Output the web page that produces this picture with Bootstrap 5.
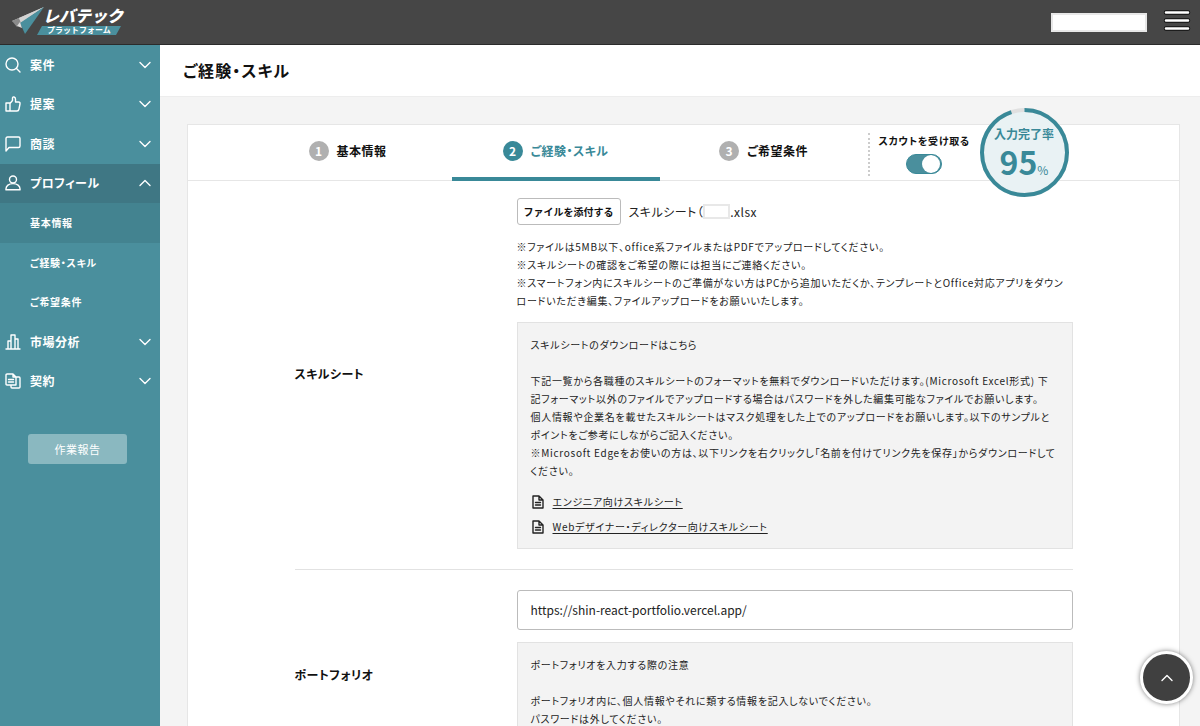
<!DOCTYPE html>
<html lang="ja">
<head>
<meta charset="utf-8">
<meta name="viewport" content="width=device-width, initial-scale=1">
<title>ご経験・スキル</title>
<link href="https://cdn.jsdelivr.net/npm/bootstrap@5.3.0/dist/css/bootstrap.min.css" rel="stylesheet">
<style>
:root { --teal: #4a8f9d; --teal-strong: #398998; --line: #e6e6e6; }
body { font-family: "Noto Sans CJK JP", sans-serif; font-feature-settings: "palt"; color: #222; background: #f4f4f4; font-size: 10px; line-height: 18px; letter-spacing: .07em; }
.topbar { background: #464646; height: 45px; border-bottom: 1px solid #2b2b2b; }
.user-box { width: 96px; height: 19px; border: 2px solid #e8e8e8; background: #fff; }
.side { width: 160px; background: var(--teal); }
.side-list { height: 356px; }
.side-list a { flex: 1; color: #fff; text-decoration: none; font-weight: 700; }
.side-main { gap: 9px; padding: 0 9px 0 5px; font-size: 12px; letter-spacing: .04em; }
.side-sub { padding-left: 30px; }
.side-open { background: #3f7784; }
.side-current { background: #438390; }
.side svg, .doc-link svg, .to-top svg { fill: none; stroke: currentColor; stroke-width: 1.4; stroke-linecap: round; stroke-linejoin: round; flex: none; }
.report { width: 99px; height: 30px; margin: 33px 0 0 28px; border-radius: 3px; background: #8ab8c0; color: #fff; font-size: 11px; letter-spacing: .04em; }
.screen { min-height: 100vh; }
.shell { height: calc(100vh - 45px); }
.shell main { overflow-y: auto; scrollbar-width: none; }
.shell main::-webkit-scrollbar { display: none; }
.page-head { height: 52px; border-bottom: 1px solid #ededed; padding-left: 23px; }
.page-head h1 { font-size: 16px; color: #111; letter-spacing: .07em; }
.panel { margin: 27px 20px 0 27px; border: 1px solid var(--line); background: #fff; }
.steps { height: 56px; border-bottom: 1px solid var(--line); }
.steps-inner { width: 880px; max-width: 100%; height: 55px; }
.step { width: 208px; color: #111; font-size: 12px; font-weight: 700; letter-spacing: .04em; text-decoration: none; border-bottom: 4px solid transparent; margin-bottom: -1px; }
.step-num { width: 20px; height: 20px; border-radius: 50%; background: #b0b0b0; color: #fff; letter-spacing: 0; }
.step.current { color: var(--teal-strong); border-color: var(--teal-strong); }
.step.current .step-num { background: var(--teal-strong); }
.scout { border-left: 2px dotted #ccc; height: 43px; margin-top: 8px; padding-left: 9px; width: 112px; color: #111; font-weight: 700; line-height: 15px; }
.scout .form-switch .form-check-input { width: 36px; height: 20px; margin: 6px 0 0 27px; float: none; background-color: var(--teal); border-color: var(--teal-strong); background-size: 24px; }
.scout .form-switch .form-check-input:checked { background-position: right -2px center; }
.meter { width: 89px; height: 89px; margin-top: -17px; color: var(--teal-strong); position: relative; z-index: 1; }
.meter svg { position: absolute; inset: 0; }
.meter-text { position: relative; text-align: center; font-weight: 700; font-size: 12px; letter-spacing: 0; padding-top: 17px; }
.meter-num { font-size: 32px; line-height: 36px; }
.meter-unit { font-size: 12px; font-weight: 400; }
.form-body { width: 778px; max-width: 100%; padding-top: 17px; }
.form-label-col { width: 222px; flex: none; font-size: 12px; font-weight: 700; letter-spacing: .04em; color: #111; }
.attach { border: 1px solid #bbb; border-radius: 3px; height: 27px; width: 104px; color: #111; font-size: 10px; font-weight: 700; padding: 0; letter-spacing: 0; background: #fff; }
.file-name { font-size: 12px; letter-spacing: .04em; }
.file-mask { width: 27px; height: 15px; border: 2px solid #e8e8e8; background: #fff; }
.notes { margin: 13px 0 12px; }
.note-box { background: #f3f3f3; border: 1px solid #e2e2e2; padding: 13px 14px 9px 13px; }
.note-box.portfolio-note { margin-top: 12px; min-height: 118px; }
.doc-list { margin-top: 9px; }
.doc-link a { color: #222; text-decoration: underline; text-underline-offset: 2px; }
.doc-link { height: 25px; }
.url-input { height: 40px; border: 1px solid #bbb; border-radius: 3px; padding: 0 13px 2px; font-size: 12px; letter-spacing: 0; color: #222; }
.separator { height: 1px; background: #e2e2e2; margin: 20px 0; }
.to-top { position: fixed; right: 7px; bottom: 22px; width: 53px; height: 53px; border: 3px solid #fff; border-radius: 50%; background: #404040; color: #fff; box-shadow: 0 0 5px rgba(0,0,0,.5); z-index: 2; }
.logo-main { font: italic 900 16px "Noto Sans CJK JP", sans-serif; letter-spacing: 0; }
.logo-sub { font: 700 8px "Noto Sans CJK JP", sans-serif; letter-spacing: 0; }
</style>
</head>
<body>
<div class="screen d-flex flex-column">
  <header class="topbar d-flex align-items-center justify-content-between flex-shrink-0">
    <a href="#" aria-label="レバテック プラットフォーム" class="d-block ms-2">
      <svg class="d-block" width="120" height="44" viewBox="8 0 120 44">
        <path d="M44 7 12 21 19 24Z" fill="#c9c9c9"/><path d="M12 21 19 18 21 22 17 27Z" fill="#8b8b8b"/>
        <path d="M44 7 19 18 21 23Z" fill="#d2d2d2"/><path d="M44 7 20 23 25 34Z" fill="#4a8f9d"/><path d="M20 22 17 26 22 28Z" fill="#ddd"/>
        <path d="M42 26h79l-5 9H37Z" fill="#4a8f9d"/>
        <text class="logo-main" x="43" y="22" fill="#fff">レバテック</text>
        <text class="logo-sub" x="47" y="33" fill="#fff">プラットフォーム</text>
      </svg>
    </a>
    <div class="d-flex align-items-center">
      <div class="user-box"></div>
      <button class="btn p-0 border-0 ms-3 me-2" type="button" aria-label="メニュー">
        <svg class="d-block" width="29" height="24" viewBox="0 0 29 24" stroke-linecap="round"><path d="M3 2.500H25M3 10.500H25M3 18.500H25" stroke="#111" stroke-width="4.500"/><path d="M3 2.500H25M3 10.500H25M3 18.500H25" stroke="#fff" stroke-width="2.600"/></svg>
      </button>
    </div>
  </header>
  <div class="shell d-flex overflow-hidden">
    <nav class="side flex-shrink-0">
      <div class="side-list d-flex flex-column">
      <a href="#" class="side-main d-flex align-items-center"><svg width="16" height="16" viewBox="0 0 16 16"><circle cx="7" cy="7" r="6"/><path d="m11.500 11.500 3.500 3.500"/></svg><span class="me-auto">案件</span><svg width="12" height="8" viewBox="0 0 12 8"><path d="m1 1.500 5 5 5-5"/></svg></a>
      <a href="#" class="side-main d-flex align-items-center"><svg width="16" height="16" viewBox="0 0 16 16"><path d="M1 7h4v8H1ZM5 7.500l2.500-3V2c0-2 3-1 3 1v3h3q1.800 0 1.500 2l-1 5q-.4 2-2 2H5"/></svg><span class="me-auto">提案</span><svg width="12" height="8" viewBox="0 0 12 8"><path d="m1 1.500 5 5 5-5"/></svg></a>
      <a href="#" class="side-main d-flex align-items-center"><svg width="16" height="16" viewBox="0 0 16 16"><path d="M2.500 1h11q1.500 0 1.500 1.500v7.500q0 1.500-1.500 1.500H4L1 15V2.500Q1 1 2.500 1Z"/></svg><span class="me-auto">商談</span><svg width="12" height="8" viewBox="0 0 12 8"><path d="m1 1.500 5 5 5-5"/></svg></a>
      <a href="#" class="side-main side-open d-flex align-items-center"><svg width="16" height="16" viewBox="0 0 16 16"><circle cx="8" cy="4.500" r="3.500"/><path d="M1 14.800C0 6.500 16 6.500 15 14.800Z"/></svg><span class="me-auto">プロフィール</span><svg width="12" height="8" viewBox="0 0 12 8"><path d="m1 6.500 5-5 5 5"/></svg></a>
      <a href="#" class="side-sub side-current d-flex align-items-center">基本情報</a>
      <a href="#" class="side-sub d-flex align-items-center">ご経験・スキル</a>
      <a href="#" class="side-sub d-flex align-items-center">ご希望条件</a>
      <a href="#" class="side-main d-flex align-items-center"><svg width="16" height="16" viewBox="0 0 16 16"><path d="M1 15h14M3 15V7h3v8M6 15V1h4v14M10 5h3v10"/></svg><span class="me-auto">市場分析</span><svg width="12" height="8" viewBox="0 0 12 8"><path d="m1 1.500 5 5 5-5"/></svg></a>
      <a href="#" class="side-main d-flex align-items-center"><svg width="16" height="16" viewBox="0 0 16 16"><path d="M2 1h6l3 3v8H2q-1 0-1-1V2q0-1 1-1ZM8 1v3h3M3.500 6.500h5M3.500 9h5M11 4h3q1 0 1 1v9q0 1-1 1H7q-1 0-1-1v-2"/></svg><span class="me-auto">契約</span><svg width="12" height="8" viewBox="0 0 12 8"><path d="m1 1.500 5 5 5-5"/></svg></a>
      </div>
      <button type="button" class="report btn border-0 p-0">作業報告</button>
    </nav>
    <main class="flex-grow-1">
      <div class="page-head bg-white d-flex align-items-center"><h1 class="fw-bold m-0">ご経験・スキル</h1></div>
      <section class="panel">
        <div class="steps">
          <div class="steps-inner mx-auto d-flex">
            <a href="#" class="step d-flex align-items-center justify-content-center"><span class="step-num me-2 d-flex align-items-center justify-content-center">1</span>基本情報</a>
            <a href="#" class="step current d-flex align-items-center justify-content-center"><span class="step-num me-2 d-flex align-items-center justify-content-center">2</span>ご経験・スキル</a>
            <a href="#" class="step d-flex align-items-center justify-content-center"><span class="step-num me-2 d-flex align-items-center justify-content-center">3</span>ご希望条件</a>
            <div class="scout">
              <label class="d-block text-nowrap" for="scout">スカウトを受け取る</label>
              <div class="form-switch p-0"><input class="form-check-input d-block" type="checkbox" role="switch" id="scout" checked></div>
            </div>
            <div class="meter">
              <svg width="89" height="89" viewBox="0 0 89 89"><circle cx="44.500" cy="44.500" r="42.500" fill="#e9f2f4" stroke="#e0e0e0" stroke-width="4"/><circle cx="44.500" cy="44.500" r="42.500" fill="none" stroke="#398998" stroke-width="4" pathLength="100" stroke-dasharray="95 5" transform="rotate(-90 44.500 44.500)"/></svg>
              <div class="meter-text">入力完了率<div class="meter-num">95<span class="meter-unit">%</span></div></div>
            </div>
          </div>
        </div>
        <div class="form-body mx-auto">
          <div class="d-flex align-items-center">
            <div class="form-label-col">スキルシート</div>
            <div class="flex-grow-1">
              <div class="d-flex align-items-center"><button type="button" class="attach me-2">ファイルを添付する</button><span class="file-name">スキルシート（</span><span class="file-mask"></span><span class="file-name">.xlsx</span></div>
              <p class="notes">※ファイルは5MB以下、office系ファイルまたはPDFでアップロードしてください。<br>※スキルシートの確認をご希望の際には担当にご連絡ください。<br>※スマートフォン内にスキルシートのご準備がない方はPCから追加いただくか、テンプレートとOffice対応アプリをダウンロードいただき編集、ファイルアップロードをお願いいたします。</p>
              <div class="note-box">
                <p class="m-0">スキルシートのダウンロードはこちら<br><br>下記一覧から各職種のスキルシートのフォーマットを無料でダウンロードいただけます。(Microsoft Excel形式) 下記フォーマット以外のファイルでアップロードする場合はパスワードを外した編集可能なファイルでお願いします。<br>個人情報や企業名を載せたスキルシートはマスク処理をした上でのアップロードをお願いします。以下のサンプルとポイントをご参考にしながらご記入ください。<br>※Microsoft Edgeをお使いの方は、以下リンクを右クリックし「名前を付けてリンク先を保存」からダウンロードしてください。</p>
                <div class="doc-list">
                <div class="doc-link d-flex align-items-center"><svg class="me-2" width="14" height="14" viewBox="0 0 14 14"><path d="M2 1h6l4 4v8H2ZM8 1v4h4M4.500 7.500h5M4.500 10h5"/></svg><a href="#">エンジニア向けスキルシート</a></div>
                <div class="doc-link d-flex align-items-center"><svg class="me-2" width="14" height="14" viewBox="0 0 14 14"><path d="M2 1h6l4 4v8H2ZM8 1v4h4M4.500 7.500h5M4.500 10h5"/></svg><a href="#">Webデザイナー・ディレクター向けスキルシート</a></div>
                </div>
              </div>
            </div>
          </div>
          <div class="separator"></div>
          <div class="d-flex align-items-center">
            <label class="form-label-col" for="portfolio">ポートフォリオ</label>
            <div class="flex-grow-1">
              <input id="portfolio" class="url-input w-100 d-block" type="text" value="https://shin-react-portfolio.vercel.app/">
              <div class="note-box portfolio-note">
                <p class="m-0">ポートフォリオを入力する際の注意<br><br>ポートフォリオ内に、個人情報やそれに類する情報を記入しないでください。<br>パスワードは外してください。</p>
              </div>
            </div>
          </div>
        </div>
      </section>
    </main>
  </div>
</div>
<button type="button" class="to-top d-flex align-items-center justify-content-center p-0" aria-label="ページの先頭へ"><svg width="12" height="8" viewBox="0 0 12 8"><path d="m1 6.500 5-5 5 5"/></svg></button>
<script src="https://cdn.jsdelivr.net/npm/bootstrap@5.3.0/dist/js/bootstrap.bundle.min.js"></script>
</body>
</html>
